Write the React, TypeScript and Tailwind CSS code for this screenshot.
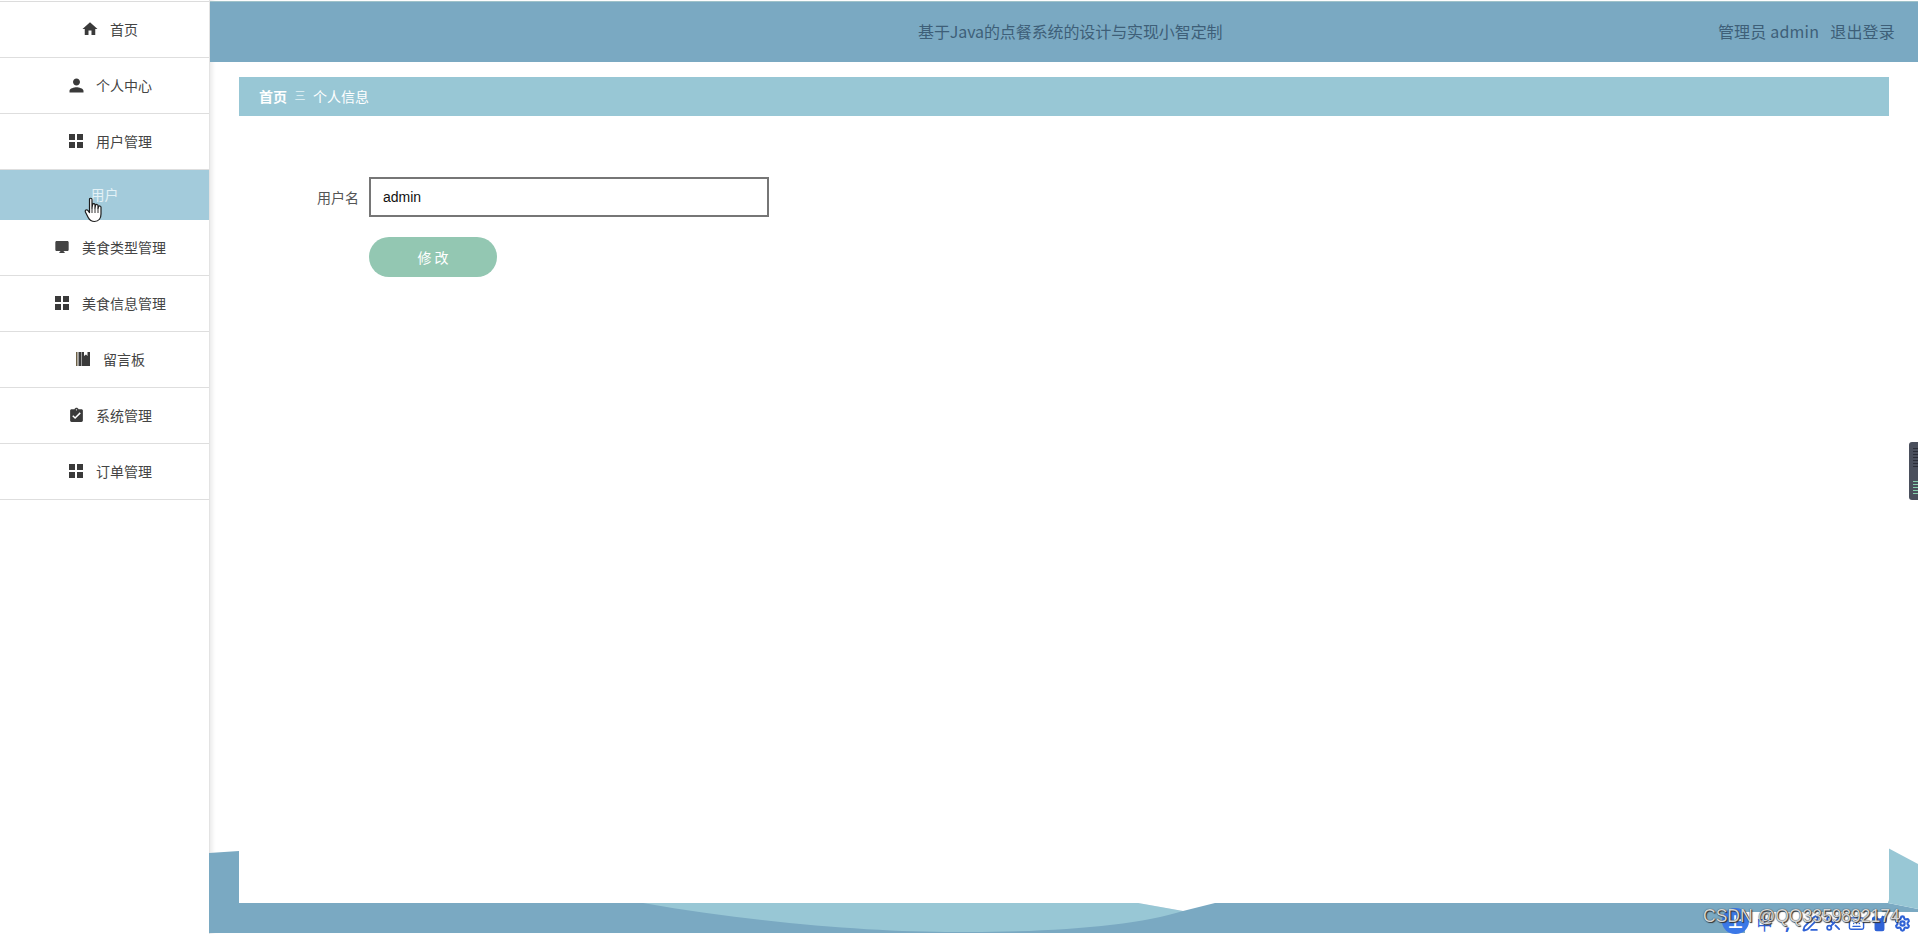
import { MdHome, MdPerson, MdDesktopMac, MdAssignmentTurnedIn } from "react-icons/md";
import { Scissors, Keyboard, Shirt, Settings, PenLine } from "lucide-react";
import type { ReactNode } from "react";

const cjk = "font-['Noto_Sans_CJK_SC','Liberation_Sans',sans-serif]";

function GridIcon() {
  return (
    <svg className="max-w-none shrink-0" width="14" height="14" viewBox="0 0 14 14" fill="#3a3a3a">
      <rect x="0" y="0" width="6" height="6" />
      <rect x="8" y="0" width="6" height="6" />
      <rect x="0" y="8" width="6" height="6" />
      <rect x="8" y="8" width="6" height="6" />
    </svg>
  );
}

function BookIcon() {
  return (
    <svg className="max-w-none shrink-0" width="14" height="14" viewBox="0 0 14 14" fill="#3a3a3a">
      <rect x="0" y="0" width="1.5" height="14" fill="#6b5f45" />
      <path d="M2.5 0H5V14H2.5Z" />
      <path d="M5.5 0H8V4L10 2.5L11.5 4V0H14V14H5.5Z" />
    </svg>
  );
}

const menu: { label: string; icon: ReactNode; active?: boolean }[] = [
  { label: "首页", icon: <MdHome size={18} className="max-w-none shrink-0 text-[#3a3a3a]" /> },
  { label: "个人中心", icon: <MdPerson size={21} className="max-w-none shrink-0 text-[#3a3a3a]" /> },
  { label: "用户管理", icon: <GridIcon /> },
  { label: "用户", icon: null, active: true },
  { label: "美食类型管理", icon: <MdDesktopMac size={16} className="max-w-none shrink-0 text-[#444]" /> },
  { label: "美食信息管理", icon: <GridIcon /> },
  { label: "留言板", icon: <BookIcon /> },
  { label: "系统管理", icon: <MdAssignmentTurnedIn size={17} className="max-w-none shrink-0 text-[#3a3a3a]" /> },
  { label: "订单管理", icon: <GridIcon /> },
];

function Sidebar() {
  return (
    <aside className={`relative z-10 mt-px w-[209px] shrink-0 border-t border-[#dcdcdc] bg-white text-sm text-[#444] ${cjk}`}>
      {menu.map((item) =>
        item.active ? (
          <div
            key={item.label}
            className="flex h-[50px] items-center justify-center bg-[#a3cbdb] pb-[2px] text-[#e3f1f6]"
          >
            {item.label}
          </div>
        ) : (
          <div
            key={item.label}
            className="flex h-[56px] items-center justify-center gap-[13px] border-b border-[#dedede] pb-px pl-[12px]"
          >
            <span className="flex h-[18px] w-[14px] items-center justify-center">{item.icon}</span>
            <span>{item.label}</span>
          </div>
        ),
      )}
      <svg className="absolute left-[84px] top-[195px]" width="20" height="26" viewBox="0 0 20 26">
        <path
          d="M5.5 2.5C5.5 0.8 8 0.8 8 2.5V11L8.6 7.5C9 6.2 11 6.4 11 7.8V11L11.5 8.3C12 7 14 7.3 14 8.7V11.5L14.6 9.6C15.2 8.5 17 8.9 17 10.3V17C17 21 15 24.5 10.5 24.5C7 24.5 5.5 23 4.2 20.5L1.4 15C0.6 13.4 2.6 12 3.8 13.4L5.5 15.6Z"
          fill="#fff"
          stroke="#1d1d1d"
          strokeWidth="1.2"
          strokeLinejoin="round"
        />
        <path d="M8 11V16M11 11V16M14 11.5V16" stroke="#1d1d1d" strokeWidth="0.9" />
      </svg>
    </aside>
  );
}

function BackgroundWave() {
  return (
    <svg className="absolute bottom-0 left-[-1px] max-w-none" width="1709" height="94" viewBox="0 0 1709 94">
      <path d="M0 13L30 11V63H1679L1709 69V93H0Z" fill="#7aa9c2" />
      <path d="M1679 8L1709 24V69L1679 63Z" fill="#98c7d5" />
      <path d="M434 63C560 85 680 93 760 92C850 92 930 85 974 71L929 63Z" fill="#98c7d5" />
      <path d="M929 63L974 71L1006 63Z" fill="#ffffff" />
    </svg>
  );
}

function TrayBar() {
  const slot = "flex w-[23px] items-center justify-center";
  const cls = "h-[17px] w-[17px] text-[#2f62d6]";
  return (
    <div className="absolute bottom-0 right-0 flex h-[22px] w-[173px] items-center bg-white pl-[8px] pr-[4px]">
      <div className="absolute bottom-0 left-[-23px] flex h-[26px] w-[27px] items-center justify-center rounded-full bg-[#3b78e7]">
        <span className={`text-sm font-bold leading-none text-white ${cjk}`}>上</span>
      </div>
      <span className={`${slot} text-[16px] leading-none text-[#2f62d6] ${cjk}`}>中</span>
      <span className={`${slot} text-[18px] font-bold leading-none text-[#2f62d6]`}>,</span>
      <span className={slot}><PenLine className={cls} strokeWidth={2.5} /></span>
      <span className={slot}><Scissors className={cls} strokeWidth={2.5} /></span>
      <span className={slot}><Keyboard className={cls} /></span>
      <span className={slot}><Shirt className={cls} fill="#2f62d6" /></span>
      <span className={slot}><Settings className={cls} strokeWidth={3} /></span>
    </div>
  );
}

function EdgeWidget() {
  return (
    <div className="absolute right-0 top-[442px] flex h-[58px] w-[9px] flex-col justify-between rounded-l-[3px] bg-[#4a4f5c] py-[6px] pl-[4px]">
      <div className="flex flex-col gap-[2px]">
        {[0, 1, 2, 3, 4, 5, 6].map((i) => (
          <div key={i} className="h-px bg-[#2b2e38]" />
        ))}
      </div>
      <div className="flex flex-col gap-[2px]">
        {[0, 1, 2, 3, 4].map((i) => (
          <div key={i} className="h-px bg-[#86d0ad]" />
        ))}
      </div>
    </div>
  );
}

export default function App() {
  return (
    <div className="relative flex h-[934px] w-[1918px] overflow-hidden bg-white">
      <Sidebar />
      <main className="relative flex min-w-0 flex-1 flex-col border-l border-[#e3e3e3] shadow-[inset_5px_0_5px_-3px_#e8e8e8]">
        <BackgroundWave />
        <header className={`relative mt-px flex h-[61px] shrink-0 items-center border-t border-[#9fc2c9] bg-[#7aa9c2] pb-[2px] pl-[708px] text-base tracking-[-0.1px] text-[#3e5f78] ${cjk}`}>
          <span>基于Java的点餐系统的设计与实现小智定制</span>
          <span className="ml-auto pr-[23px] tracking-[0.2px]">
            管理员 admin<span className="ml-[11px]">退出登录</span>
          </span>
        </header>
        <section className="relative mx-[29px] flex h-[841px] flex-col rounded-b-[4px] bg-white">
          <div className={`mt-[15px] flex h-[39px] items-center gap-[9px] bg-[#98c7d5] pb-px pl-[20px] text-sm text-white ${cjk}`}>
            <span className="font-bold">首页</span>
            <span className="flex w-[8px] justify-center text-[11px] text-[#e6f4f7]">三</span>
            <span>个人信息</span>
          </div>
          <form className="mt-[61px] flex flex-col gap-[20px] pl-[130px]">
            <div className="flex items-center">
              <label className={`-ml-[130px] mr-[10px] w-[120px] text-right text-sm text-[#555] ${cjk}`}>用户名</label>
              <input
                readOnly
                value="admin"
                className="h-[40px] w-[400px] border-2 border-[#767676] bg-white px-[12px] font-['Liberation_Sans',sans-serif] text-sm text-[#111] outline-none"
              />
            </div>
            <button
              type="button"
              className={`h-[40px] w-[128px] rounded-[20px] bg-[#93c7b2] text-sm text-white ${cjk}`}
            >
              修 改
            </button>
          </form>
        </section>
      </main>
      <EdgeWidget />
      <TrayBar />
      <span className="absolute bottom-[9px] left-[1703px] font-['Liberation_Sans',sans-serif] text-[17.5px] leading-none text-[#d4d4d4] [text-shadow:0_0_1px_#222,1px_1px_1px_#333]">
        CSDN @QQ3359892174
      </span>
    </div>
  );
}
